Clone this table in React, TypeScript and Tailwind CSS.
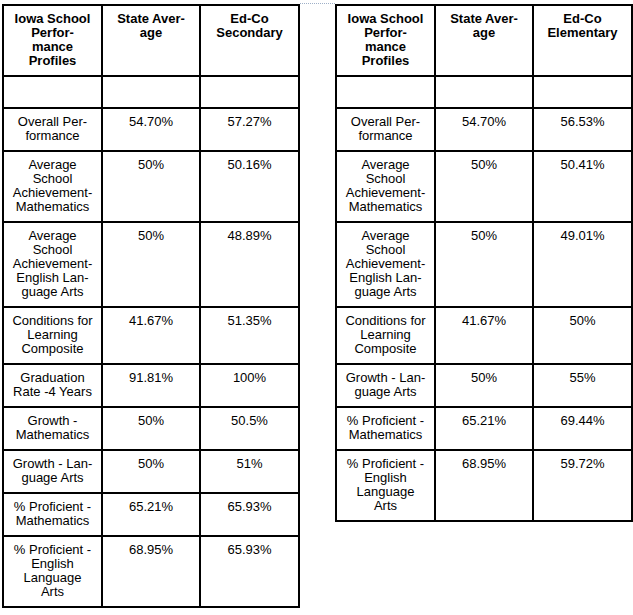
import React from "react"

type Row = { label: string[]; state: string; school: string }

const secondaryRows: Row[] = [
	{ label: ["Overall Per-", "formance"], state: "54.70%", school: "57.27%" },
	{ label: ["Average", "School", "Achievement-", "Mathematics"], state: "50%", school: "50.16%" },
	{ label: ["Average", "School", "Achievement-", "English Lan-", "guage Arts"], state: "50%", school: "48.89%" },
	{ label: ["Conditions for", "Learning", "Composite"], state: "41.67%", school: "51.35%" },
	{ label: ["Graduation", "Rate -4 Years"], state: "91.81%", school: "100%" },
	{ label: ["Growth -", "Mathematics"], state: "50%", school: "50.5%" },
	{ label: ["Growth - Lan-", "guage Arts"], state: "50%", school: "51%" },
	{ label: ["% Proficient -", "Mathematics"], state: "65.21%", school: "65.93%" },
	{ label: ["% Proficient -", "English", "Language", "Arts"], state: "68.95%", school: "65.93%" },
]

const elementaryRows: Row[] = [
	{ label: ["Overall Per-", "formance"], state: "54.70%", school: "56.53%" },
	{ label: ["Average", "School", "Achievement-", "Mathematics"], state: "50%", school: "50.41%" },
	{ label: ["Average", "School", "Achievement-", "English Lan-", "guage Arts"], state: "50%", school: "49.01%" },
	{ label: ["Conditions for", "Learning", "Composite"], state: "41.67%", school: "50%" },
	{ label: ["Growth - Lan-", "guage Arts"], state: "50%", school: "55%" },
	{ label: ["% Proficient -", "Mathematics"], state: "65.21%", school: "69.44%" },
	{ label: ["% Proficient -", "English", "Language", "Arts"], state: "68.95%", school: "59.72%" },
]

const Lines = ({ lines }: { lines: string[] }) => (
	<>
		{lines.map(line => (
			<div key={line} className="whitespace-nowrap">
				{line}
			</div>
		))}
	</>
)

const cell = "border-2 border-black align-top text-center px-[2px] pt-[6px] pb-[7px]"

const ProfileTable = ({ title, rows }: { title: string[]; rows: Row[] }) => (
	<table className="w-[296px] table-fixed border-collapse bg-white">
		<colgroup>
			<col className="w-[99px]" />
			<col className="w-[98px]" />
			<col className="w-[99px]" />
		</colgroup>
		<thead>
			<tr>
				<th className={`${cell} font-bold`}>
					<Lines lines={["Iowa School", "Perfor-", "mance", "Profiles"]} />
				</th>
				<th className={`${cell} font-bold`}>
					<Lines lines={["State Aver-", "age"]} />
				</th>
				<th className={`${cell} font-bold`}>
					<Lines lines={title} />
				</th>
			</tr>
		</thead>
		<tbody>
			<tr className="h-[32px]">
				<td className="border-2 border-black"></td>
				<td className="border-2 border-black"></td>
				<td className="border-2 border-black"></td>
			</tr>
			{rows.map(row => (
				<tr key={row.label.join(" ")}>
					<td className={cell}>
						<Lines lines={row.label} />
					</td>
					<td className={cell}>{row.state}</td>
					<td className={cell}>{row.school}</td>
				</tr>
			))}
		</tbody>
	</table>
)

export default function App() {
	return (
		<div className="min-h-[615px] w-[633px] bg-white font-['Liberation_Sans',Arial,sans-serif] text-[13px] leading-[14px] text-black">
			<div className="flex items-start pl-[2px] pt-[4px]">
				<ProfileTable title={["Ed-Co", "Secondary"]} rows={secondaryRows} />
				<div className="-mt-[1px] w-[38px] border-t border-dotted border-[#9fb0c8]" />
				<ProfileTable title={["Ed-Co", "Elementary"]} rows={elementaryRows} />
			</div>
		</div>
	)
}
